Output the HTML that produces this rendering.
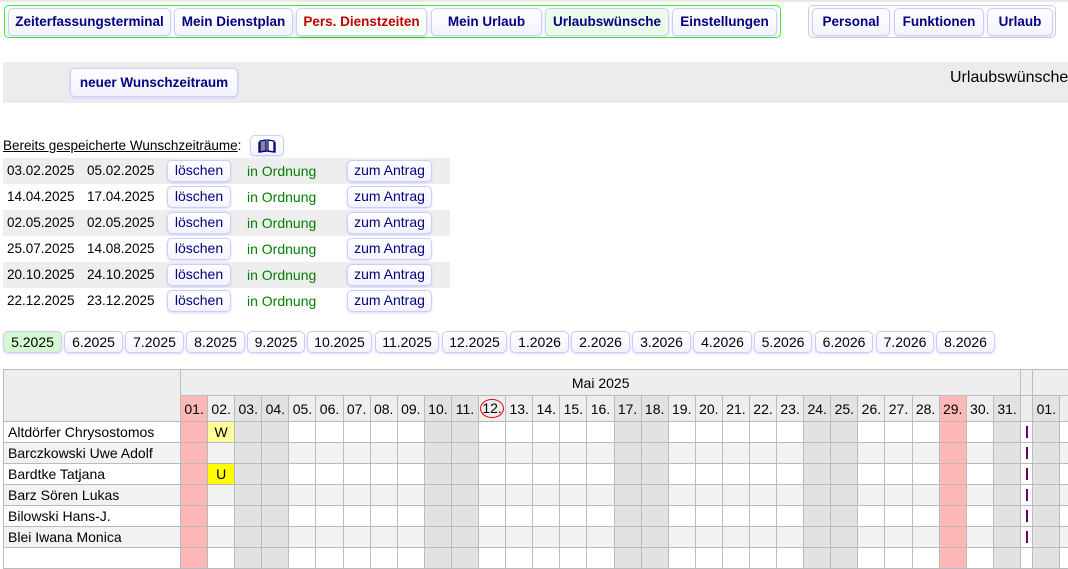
<!DOCTYPE html>
<html><head><meta charset="utf-8">
<style>
*{box-sizing:border-box;margin:0;padding:0}
body{width:1068px;height:549px;overflow:hidden;background:#fff;font-family:"Liberation Sans",Arial,sans-serif;font-size:13px;color:#000;position:relative}
.a{position:absolute}
.btn{position:absolute;border:1px solid #ccf;border-radius:5px;background:linear-gradient(#fff,#f3f3ff);box-shadow:0 1px 2px rgba(150,150,255,.35);text-align:center;white-space:nowrap}
.nav{top:8px;height:28px;line-height:26px;font-weight:bold;color:#000080;font-size:13.5px}
.lb{height:22px;line-height:19px;color:#000080;font-size:14px}
.mt{top:331px;height:22px;line-height:20px;font-size:14px;color:#000}
.row{position:absolute;left:3px;width:447px;height:26px;font-size:13.5px}
.row span{position:absolute;top:5px}
.g{color:#008000;font-size:14px}
table{position:absolute;left:3px;top:369px;width:1083px;border-collapse:collapse;table-layout:fixed;font-size:14px}
td{border:1px solid #bbb;height:21px;padding:0;overflow:hidden;white-space:nowrap}
tr.hd td{background:#eee;height:26px;text-align:center}
tr.dd td{background:#eee;text-align:center;height:26px}
td.n{padding-left:4px;text-align:left}
tr.o td{background:#fff}
tr.e td{background:#f2f2f2}
tr td.w{background:#e2e2e2}
tr td.h{background:#ffb8b8}
td.s{background:#eee!important}
td.s.m{background:#fff!important}
.bar{display:block;width:2px;height:12px;background:#6a006a;margin:0 auto}
</style></head><body>
<div class="a" style="left:0;top:0;width:1068px;height:2px;background:#e8e8e8"></div>
<div class="a" style="left:4px;top:5px;width:777px;height:33px;border:1.5px solid #3e3;border-radius:5px"></div>
<div class="a" style="left:808px;top:5px;width:248px;height:33px;border:1px solid #ccc;border-radius:5px"></div>
<div class="btn nav" style="left:8px;width:163px">Zeiterfassungsterminal</div>
<div class="btn nav" style="left:174px;width:119px">Mein Dienstplan</div>
<div class="btn nav" style="left:296px;width:131px;color:#c00000;background:linear-gradient(#fff,#f2fff2);box-shadow:0 2px 4px rgba(0,0,0,.2)">Pers. Dienstzeiten</div>
<div class="btn nav" style="left:431px;width:111px">Mein Urlaub</div>
<div class="btn nav" style="left:545px;width:124px;background:#eafbea">Urlaubswünsche</div>
<div class="btn nav" style="left:672px;width:105px">Einstellungen</div>
<div class="btn nav" style="left:812px;width:78px">Personal</div>
<div class="btn nav" style="left:894px;width:90px">Funktionen</div>
<div class="btn nav" style="left:987px;width:66px">Urlaub</div>

<div class="a" style="left:3px;top:62px;width:1065px;height:41px;background:#ececec"></div>
<div class="btn" style="left:70px;top:68px;width:168px;height:29px;line-height:27px;font-weight:bold;color:#000080;font-size:13.5px">neuer Wunschzeitraum</div>
<div class="a" style="left:950px;top:69px;font-size:16px;white-space:nowrap">Urlaubswünsche</div>

<div class="a" style="left:3px;top:138px;font-size:13.5px"><u>Bereits gespeicherte Wunschzeiträume</u>:</div>
<div class="btn" style="left:250px;top:135px;width:34px;height:21px">
<svg width="18" height="14" viewBox="0 0 18 14" style="margin-top:3px"><path d="M2 2 L8 1 L8 12 L2 13 Z" fill="#888" stroke="#000080" stroke-width="1.3"/><path d="M10 1 L16 2 L16 13 L10 12 Z" fill="#fff" stroke="#000080" stroke-width="1.3"/><path d="M1 3 V13 L9 12 L17 13 V3" fill="none" stroke="#000080" stroke-width="1.3"/></svg></div>

<div class="row" style="top:158px;background:#eee"><span style="left:4px">03.02.2025</span><span style="left:84px">05.02.2025</span><span class="g" style="left:244px">in Ordnung</span></div>
<div class="row" style="top:184px"><span style="left:4px">14.04.2025</span><span style="left:84px">17.04.2025</span><span class="g" style="left:244px">in Ordnung</span></div>
<div class="row" style="top:210px;background:#eee"><span style="left:4px">02.05.2025</span><span style="left:84px">02.05.2025</span><span class="g" style="left:244px">in Ordnung</span></div>
<div class="row" style="top:236px"><span style="left:4px">25.07.2025</span><span style="left:84px">14.08.2025</span><span class="g" style="left:244px">in Ordnung</span></div>
<div class="row" style="top:262px;background:#eee"><span style="left:4px">20.10.2025</span><span style="left:84px">24.10.2025</span><span class="g" style="left:244px">in Ordnung</span></div>
<div class="row" style="top:288px"><span style="left:4px">22.12.2025</span><span style="left:84px">23.12.2025</span><span class="g" style="left:244px">in Ordnung</span></div>

<div class="btn lb" style="left:167px;top:160px;width:64px">löschen</div><div class="btn lb" style="left:347px;top:160px;width:85px">zum Antrag</div>
<div class="btn lb" style="left:167px;top:186px;width:64px">löschen</div><div class="btn lb" style="left:347px;top:186px;width:85px">zum Antrag</div>
<div class="btn lb" style="left:167px;top:212px;width:64px">löschen</div><div class="btn lb" style="left:347px;top:212px;width:85px">zum Antrag</div>
<div class="btn lb" style="left:167px;top:238px;width:64px">löschen</div><div class="btn lb" style="left:347px;top:238px;width:85px">zum Antrag</div>
<div class="btn lb" style="left:167px;top:264px;width:64px">löschen</div><div class="btn lb" style="left:347px;top:264px;width:85px">zum Antrag</div>
<div class="btn lb" style="left:167px;top:290px;width:64px">löschen</div><div class="btn lb" style="left:347px;top:290px;width:85px">zum Antrag</div>

<div class="btn mt" style="left:3px;width:59px;background:#d4f7d4">5.2025</div>
<div class="btn mt" style="left:64px;width:59px">6.2025</div>
<div class="btn mt" style="left:125px;width:59px">7.2025</div>
<div class="btn mt" style="left:186px;width:59px">8.2025</div>
<div class="btn mt" style="left:247px;width:58px">9.2025</div>
<div class="btn mt" style="left:307px;width:65px">10.2025</div>
<div class="btn mt" style="left:375px;width:64px">11.2025</div>
<div class="btn mt" style="left:442px;width:65px">12.2025</div>
<div class="btn mt" style="left:510px;width:59px">1.2026</div>
<div class="btn mt" style="left:571px;width:59px">2.2026</div>
<div class="btn mt" style="left:632px;width:59px">3.2026</div>
<div class="btn mt" style="left:693px;width:59px">4.2026</div>
<div class="btn mt" style="left:754px;width:58px">5.2026</div>
<div class="btn mt" style="left:815px;width:58px">6.2026</div>
<div class="btn mt" style="left:876px;width:58px">7.2026</div>
<div class="btn mt" style="left:936px;width:59px">8.2026</div>

<table>
<colgroup><col style="width:177px"><col span="31" style="width:27.1px"><col style="width:12px"><col style="width:27px"><col style="width:27px"></colgroup>
<tr class="hd"><td rowspan="2" style="background:#eee"></td><td colspan="31">Mai 2025</td><td></td><td colspan="2"></td></tr>
<tr class="dd"><td class="h">01.</td><td>02.</td><td class="w">03.</td><td class="w">04.</td><td>05.</td><td>06.</td><td>07.</td><td>08.</td><td>09.</td><td class="w">10.</td><td class="w">11.</td><td><span style="display:inline-block;border:1.3px solid #e00;border-radius:50%;padding:0 1px;line-height:17px">12.</span></td><td>13.</td><td>14.</td><td>15.</td><td>16.</td><td class="w">17.</td><td class="w">18.</td><td>19.</td><td>20.</td><td>21.</td><td>22.</td><td>23.</td><td class="w">24.</td><td class="w">25.</td><td>26.</td><td>27.</td><td>28.</td><td class="h">29.</td><td>30.</td><td class="w">31.</td><td></td><td class="w">01.</td><td>0</td></tr>
<tr class="o"><td class="n">Altdörfer Chrysostomos</td><td class="h"></td><td style="background:#ffff99;text-align:center">W</td><td class="w"></td><td class="w"></td><td></td><td></td><td></td><td></td><td></td><td class="w"></td><td class="w"></td><td></td><td></td><td></td><td></td><td></td><td class="w"></td><td class="w"></td><td></td><td></td><td></td><td></td><td></td><td class="w"></td><td class="w"></td><td></td><td></td><td></td><td class="h"></td><td></td><td class="w"></td><td class="s m"><span class="bar"></span></td><td class="w"></td><td></td></tr>
<tr class="e"><td class="n">Barczkowski Uwe Adolf</td><td class="h"></td><td></td><td class="w"></td><td class="w"></td><td></td><td></td><td></td><td></td><td></td><td class="w"></td><td class="w"></td><td></td><td></td><td></td><td></td><td></td><td class="w"></td><td class="w"></td><td></td><td></td><td></td><td></td><td></td><td class="w"></td><td class="w"></td><td></td><td></td><td></td><td class="h"></td><td></td><td class="w"></td><td class="s m"><span class="bar"></span></td><td class="w"></td><td></td></tr>
<tr class="o"><td class="n">Bardtke Tatjana</td><td class="h"></td><td style="background:#ffff00;text-align:center">U</td><td class="w"></td><td class="w"></td><td></td><td></td><td></td><td></td><td></td><td class="w"></td><td class="w"></td><td></td><td></td><td></td><td></td><td></td><td class="w"></td><td class="w"></td><td></td><td></td><td></td><td></td><td></td><td class="w"></td><td class="w"></td><td></td><td></td><td></td><td class="h"></td><td></td><td class="w"></td><td class="s m"><span class="bar"></span></td><td class="w"></td><td></td></tr>
<tr class="e"><td class="n">Barz Sören Lukas</td><td class="h"></td><td></td><td class="w"></td><td class="w"></td><td></td><td></td><td></td><td></td><td></td><td class="w"></td><td class="w"></td><td></td><td></td><td></td><td></td><td></td><td class="w"></td><td class="w"></td><td></td><td></td><td></td><td></td><td></td><td class="w"></td><td class="w"></td><td></td><td></td><td></td><td class="h"></td><td></td><td class="w"></td><td class="s m"><span class="bar"></span></td><td class="w"></td><td></td></tr>
<tr class="o"><td class="n">Bilowski Hans-J.</td><td class="h"></td><td></td><td class="w"></td><td class="w"></td><td></td><td></td><td></td><td></td><td></td><td class="w"></td><td class="w"></td><td></td><td></td><td></td><td></td><td></td><td class="w"></td><td class="w"></td><td></td><td></td><td></td><td></td><td></td><td class="w"></td><td class="w"></td><td></td><td></td><td></td><td class="h"></td><td></td><td class="w"></td><td class="s m"><span class="bar"></span></td><td class="w"></td><td></td></tr>
<tr class="e"><td class="n">Blei Iwana Monica</td><td class="h"></td><td></td><td class="w"></td><td class="w"></td><td></td><td></td><td></td><td></td><td></td><td class="w"></td><td class="w"></td><td></td><td></td><td></td><td></td><td></td><td class="w"></td><td class="w"></td><td></td><td></td><td></td><td></td><td></td><td class="w"></td><td class="w"></td><td></td><td></td><td></td><td class="h"></td><td></td><td class="w"></td><td class="s m"><span class="bar"></span></td><td class="w"></td><td></td></tr>
<tr class="o"><td class="n"></td><td class="h"></td><td></td><td class="w"></td><td class="w"></td><td></td><td></td><td></td><td></td><td></td><td class="w"></td><td class="w"></td><td></td><td></td><td></td><td></td><td></td><td class="w"></td><td class="w"></td><td></td><td></td><td></td><td></td><td></td><td class="w"></td><td class="w"></td><td></td><td></td><td></td><td class="h"></td><td></td><td class="w"></td><td class="s m"></td><td class="w"></td><td></td></tr>
</table>
</body></html>
